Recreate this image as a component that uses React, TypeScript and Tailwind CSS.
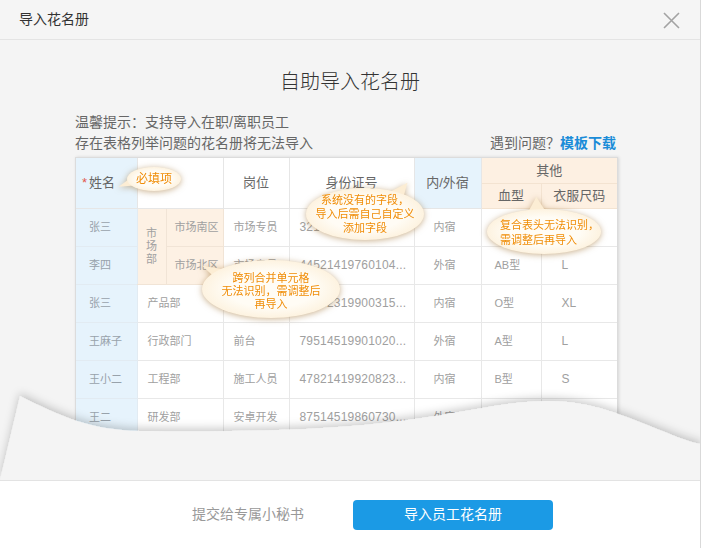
const rows = [
  { name: "张三", dept: "市场部", area: "市场南区", role: "市场专员", id: "32142119880512...", stay: "内宿", blood: "A型", size: "M" },
  { name: "李四", dept: "", area: "市场北区", role: "市场专员", id: "44521419760104...", stay: "外宿", blood: "AB型", size: "L" },
  { name: "张三", dept: "产品部", role: "产品经理", id: "41052319900315...", stay: "内宿", blood: "O型", size: "XL" },
  { name: "王麻子", dept: "行政部门", role: "前台", id: "79514519901020...", stay: "外宿", blood: "A型", size: "L" },
  { name: "王小二", dept: "工程部", role: "施工人员", id: "47821419920823...", stay: "内宿", blood: "B型", size: "S" },
  { name: "王二", dept: "研发部", role: "安卓开发", id: "87514519860730...", stay: "外宿", blood: "B型", size: "M" },
];

const bubbleFill = "bg-[radial-gradient(ellipse_at_center,#fffcf5_45%,#fbe8c8_100%)]";
const bubbleShadow = "drop-shadow-[0_1px_3px_rgba(150,100,30,0.5)]";

function Tail({ className, points }: { className: string; points: string }) {
  return (
    <svg className={"absolute " + className} viewBox="0 0 32 20">
      <polygon points={points} fill="#fcedd4" />
    </svg>
  );
}

export default function App() {
  return (
    <div className="w-[701px] h-[548px] flex flex-col bg-white border-r border-[#d9d9d9] [font-family:'Liberation_Sans','Noto_Sans_CJK_SC',sans-serif]">
      <div className="h-[40px] shrink-0 flex items-center justify-between pl-[19px] pr-[20px] bg-[#f5f5f5] border-b border-[#e4e4e4]">
        <span className="text-[14px] text-[#333]">导入花名册</span>
        <svg width="17" height="17" viewBox="0 0 17 17" className="mt-[1px]">
          <path d="M1 1 L16 16 M16 1 L1 16" stroke="#a3a3a3" strokeWidth="1.6" fill="none" />
        </svg>
      </div>

      <div className="relative h-[440px] shrink-0 bg-[#f4f4f4] overflow-hidden">
        <h1 className="pt-[29px] text-center text-[20px] leading-[26px] font-light text-[#333]">自助导入花名册</h1>

        <div className="mt-[17px] ml-[75px] w-[541px] text-[14px] leading-[21px] text-[#666]">
          <div>温馨提示：支持导入在职/离职员工</div>
          <div className="flex justify-between">
            <span>存在表格列举问题的花名册将无法导入</span>
            <span>
              遇到问题？<span className="text-[#1a8cd8] font-bold">模板下载</span>
            </span>
          </div>
        </div>

        <div className="mt-[3px] ml-[75px] w-[543px] h-[300px] bg-white border border-[#dcdcdc] shadow-[1px_0_3px_rgba(0,0,0,0.12)] overflow-hidden">
          <table className="w-full table-fixed border-collapse text-[11px] text-[#a0a0a0]">
            <colgroup>
              <col className="w-[61px]" />
              <col className="w-[29px]" />
              <col className="w-[57px]" />
              <col className="w-[66px]" />
              <col className="w-[125px]" />
              <col className="w-[67px]" />
              <col className="w-[60px]" />
              <col />
            </colgroup>
            <thead className="text-[13px] text-[#666]">
              <tr className="h-[25px]">
                <th rowSpan={2} className="font-normal text-left pl-[6px] bg-[#e6f3fc] border-r border-b border-[#e6e6e6]">
                  <span className="text-[#e2584f] mr-[2px]">*</span>姓名
                </th>
                <th rowSpan={2} colSpan={2} className="border-r border-b border-[#e6e6e6]" />
                <th rowSpan={2} className="font-normal border-r border-b border-[#e6e6e6]">岗位</th>
                <th rowSpan={2} className="font-normal border-r border-b border-[#e6e6e6]">身份证号</th>
                <th rowSpan={2} className="font-normal bg-[#e6f3fc] border-r border-b border-[#e6e6e6]">内/外宿</th>
                <th colSpan={2} className="font-normal bg-[#fdf0e2] border-b border-[#f3e3d1]">其他</th>
              </tr>
              <tr className="h-[25px]">
                <th className="font-normal bg-[#fdf0e2] border-r border-b border-[#f3e3d1]">血型</th>
                <th className="font-normal bg-[#fdf0e2] border-b border-[#f3e3d1]">衣服尺码</th>
              </tr>
            </thead>
            <tbody>
              {rows.map((r, i) => (
                <tr key={i} className="h-[38px]">
                  <td className="pl-[13px] bg-[#e6f3fc] text-[#98a2ab] border-b border-r border-[#e2ebf2]">{r.name}</td>
                  {i === 0 && (
                    <td rowSpan={2} className="bg-[#fdf1e4] text-center leading-[13px] border-b border-r border-[#f1e4d6]">
                      市<br />场<br />部
                    </td>
                  )}
                  {i < 2 ? (
                    <td className="bg-[#fdf1e4] pl-[8px] border-b border-r border-[#f1e4d6]">{r.area}</td>
                  ) : (
                    <td colSpan={2} className="pl-[10px] border-b border-r border-[#e8e8e8]">{r.dept}</td>
                  )}
                  <td className="pl-[10px] border-b border-r border-[#e8e8e8]">{r.role}</td>
                  <td className="pl-[10px] text-[12px] tracking-[0.2px] border-b border-r border-[#e8e8e8]">{r.id}</td>
                  <td className="pl-[19px] border-b border-r border-[#e8e8e8]">{r.stay}</td>
                  <td className="pl-[13px] border-b border-r border-[#e8e8e8]">{r.blood}</td>
                  <td className="pl-[20px] text-[12px] border-b border-[#e8e8e8]">{r.size}</td>
                </tr>
              ))}
            </tbody>
          </table>
        </div>

        <svg className="absolute left-0 top-[350px] overflow-visible" width="701" height="90" viewBox="0 0 701 90">
          <defs>
            <filter id="waveShadow" x="-10%" y="-60%" width="120%" height="200%">
              <feDropShadow dx="0" dy="-3" stdDeviation="4" floodColor="#000" floodOpacity="0.2" />
            </filter>
          </defs>
          <path
            d="M20 6 C60 26 90 40 140 41 C250 42 330 40 400 31 C460 24 500 12 545 11 C590 10 625 26 665 42 C680 48 690 52 701 54 L701 90 L0 90 Z"
            fill="#f4f4f4"
            filter="url(#waveShadow)"
          />
        </svg>

        <div className={"absolute left-[127px] top-[127px] w-[54px] h-[24px] " + bubbleShadow}>
          <Tail className="left-[-9px] top-[9px] w-[20px] h-[14px]" points="1,16 20,2 26,14" />
          <div className={"relative w-full h-full rounded-[50%] flex items-center justify-center text-[12px] text-[#f08c06] " + bubbleFill}>
            必填项
          </div>
        </div>

        <div className={"absolute left-[306px] top-[148px] w-[118px] h-[52px] " + bubbleShadow}>
          <Tail className="left-[78px] top-[-6px] w-[26px] h-[16px]" points="29,1 4,14 24,19" />
          <div className={"relative w-full h-full rounded-[50%] flex flex-col items-center justify-center text-[11px] leading-[14px] text-[#f08c06] " + bubbleFill}>
            <span>系统没有的字段，</span>
            <span>导入后需自己自定义</span>
            <span>添加字段</span>
          </div>
        </div>

        <div className={"absolute left-[487px] top-[169px] w-[114px] h-[45px] " + bubbleShadow}>
          <Tail className="left-[38px] top-[-13px] w-[26px] h-[18px]" points="14,0 3,20 27,20" />
          <div className={"relative w-full h-full rounded-[50%] flex flex-col justify-center pl-[13px] pt-[3px] text-[11px] leading-[15px] text-[#f08c06] " + bubbleFill}>
            <span>复合表头无法识别，</span>
            <span>需调整后再导入</span>
          </div>
        </div>

        <div className={"absolute left-[202px] top-[220px] w-[138px] h-[58px] " + bubbleShadow}>
          <Tail className="left-[-4px] top-[4px] w-[32px] h-[16px]" points="1,2 16,16 28,7" />
          <div className={"relative w-full h-full rounded-[50%] flex flex-col items-center justify-center pt-[4px] text-[11px] leading-[13px] text-[#f08c06] " + bubbleFill}>
            <span>跨列合并单元格</span>
            <span>无法识别，需调整后</span>
            <span>再导入</span>
          </div>
        </div>
      </div>

      <div className="flex-1 flex items-center border-t border-[#e3e3e3] bg-white pl-[192px] gap-[49px]">
        <span className="text-[14px] text-[#999]">提交给专属小秘书</span>
        <button className="w-[200px] h-[30px] rounded-[4px] bg-[#1b9ae5] text-white text-[14px]">导入员工花名册</button>
      </div>
    </div>
  );
}
